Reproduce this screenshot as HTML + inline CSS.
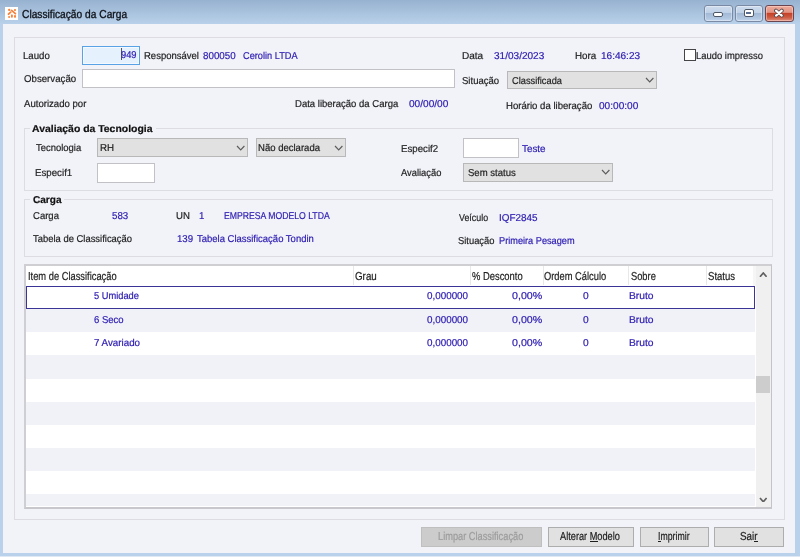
<!DOCTYPE html>
<html><head><meta charset="utf-8"><style>
*{margin:0;padding:0;box-sizing:border-box}
html,body{width:800px;height:557px;overflow:hidden}
body{position:relative;background:#b9d1ea;font-family:"Liberation Sans",sans-serif}
.a{position:absolute}
.t{position:absolute;white-space:pre;-webkit-text-stroke:0.2px currentColor;line-height:14px;text-rendering:geometricPrecision;font-family:"Liberation Sans",sans-serif;transform-origin:0 0}
.wb{position:absolute;top:5px;height:17px;border:1px solid #7a8aa4;border-radius:3px;box-shadow:inset 0 0 0 1px rgba(255,255,255,.35);background:linear-gradient(#cfdcee 0%,#c0d1e7 44%,#a3bad6 50%,#b0c6e0 80%,#c2d5ec 100%)}
</style></head><body>
<div class=a style="left:0;top:0;width:800px;height:24px;background:linear-gradient(#97b2d0,#b9d1ea)"></div>
<div class=a style="left:0;top:553px;width:800px;height:3px;background:#b9d1ea"></div>
<div class=a style="left:0;top:556px;width:800px;height:1px;background:#dde8f4"></div>
<!-- icon -->
<div class=a style="left:5px;top:7px;width:13px;height:13px;background:#fff"></div>
<svg class=a style="left:5px;top:7px;filter:blur(0.3px)" width="13" height="13" viewBox="0 0 13 13">
 <g fill="#f8823a" stroke="#f8823a" stroke-linecap="round">
  <circle cx="4.2" cy="2.9" r="1.15" stroke="none"/><circle cx="10" cy="3.1" r="1.05" stroke="none"/>
  <path d="M6.6,3.4 L10.4,6.6" stroke-width="1.8" fill="none"/>
  <path d="M3.5,7.2 L5.7,5.2" stroke-width="1.8" fill="none"/>
  <circle cx="4.1" cy="10" r="0.95" stroke="none"/>
  <ellipse cx="6.9" cy="9.1" rx="1.05" ry="1.8" stroke="none"/>
  <ellipse cx="10" cy="9.3" rx="1.0" ry="1.65" stroke="none"/>
 </g>
</svg>
<!-- window buttons -->
<div class=wb style="left:704px;width:29px"></div>
<div class=a style="left:713px;top:12px;width:10px;height:5px;background:#fff;border:1px solid #4e5766;border-radius:2px"></div>
<div class=wb style="left:735px;width:28px"></div>
<div class=a style="left:744px;top:9px;width:10px;height:8px;background:#fff;border:1px solid #4e5766;border-radius:2px"></div>
<div class=a style="left:746px;top:12px;width:5px;height:2px;background:#5a6f90"></div>
<div class=a style="left:765px;top:5px;width:29px;height:17px;border:1px solid #6b4650;border-radius:3px;box-shadow:inset 0 0 0 1px rgba(255,220,210,.5);background:linear-gradient(#eeaa9c 0%,#e39484 42%,#c4422a 50%,#cc5a40 75%,#e09080 100%)"></div>
<svg class=a style="left:773px;top:8px" width="12" height="10" viewBox="0 0 12 10"><path d="M3,2.6 L8.8,7.6 M8.8,2.6 L3,7.6" stroke="#54484e" stroke-width="3.8" stroke-linecap="round"/><path d="M3,2.6 L8.8,7.6 M8.8,2.6 L3,7.6" stroke="#fff" stroke-width="2.1" stroke-linecap="round"/></svg>

<!-- client -->
<div class=a style="left:3px;top:24px;width:792px;height:529px;background:#f2f3f9"></div>
<div class=a style="left:14px;top:37px;width:771px;height:483px;border:1px solid #dcdce2"></div>

<!-- inputs -->
<div class=a style="left:82px;top:46px;width:58px;height:19px;border:1px solid #5aa2e6;background:#e5f1fc;box-shadow:inset 0 0 0 1px #f4f9ff"></div>
<div class=a style="left:121px;top:48px;width:1px;height:12px;background:#555"></div>
<div class=a style="left:82px;top:69px;width:373px;height:19px;border:1px solid #c2c2c6;background:#fff"></div>
<div class=a style="left:507px;top:71px;width:150px;height:18px;border:1px solid #b8b8b8;background:#e1e1e1"></div>
<div class=a style="left:684px;top:49px;width:12px;height:12px;border:1px solid #454545;background:#fff"></div>

<!-- group 1 -->
<div class=a style="left:24px;top:128px;width:749px;height:63px;border:1px solid #dcdce2"></div>
<div class=a style="left:30px;top:122px;width:126px;height:12px;background:#f2f3f9"></div>
<div class=a style="left:97px;top:138px;width:151px;height:19px;border:1px solid #b8b8b8;background:#e1e1e1"></div>
<div class=a style="left:256px;top:138px;width:90px;height:19px;border:1px solid #b8b8b8;background:#e1e1e1"></div>
<div class=a style="left:97px;top:163px;width:58px;height:20px;border:1px solid #c2c2c6;background:#fff"></div>
<div class=a style="left:463px;top:138px;width:56px;height:20px;border:1px solid #c2c2c6;background:#fff"></div>
<div class=a style="left:463px;top:163px;width:150px;height:19px;border:1px solid #b8b8b8;background:#e1e1e1"></div>

<!-- group 2 -->
<div class=a style="left:24px;top:199px;width:749px;height:58px;border:1px solid #dcdce2"></div>
<div class=a style="left:30px;top:193px;width:34px;height:12px;background:#f2f3f9"></div>

<!-- grid -->
<div class=a style="left:24px;top:264px;width:748px;height:245px;border:2px solid #cfcfd3;border-right:1px solid #c4c4c8;border-bottom:2px solid #c8c8cc;background:#fff"></div>
<div class=a style="left:26px;top:266px;width:745px;height:240px;overflow:hidden;background:#fff">
<div style='position:absolute;left:0px;top:20px;width:729px;height:23px;background:#ffffff'></div>
<div style='position:absolute;left:0px;top:43px;width:729px;height:23px;background:#f1f2f8'></div>
<div style='position:absolute;left:0px;top:66px;width:729px;height:23px;background:#ffffff'></div>
<div style='position:absolute;left:0px;top:89px;width:729px;height:24px;background:#f1f2f8'></div>
<div style='position:absolute;left:0px;top:113px;width:729px;height:23px;background:#ffffff'></div>
<div style='position:absolute;left:0px;top:136px;width:729px;height:23px;background:#f1f2f8'></div>
<div style='position:absolute;left:0px;top:159px;width:729px;height:23px;background:#ffffff'></div>
<div style='position:absolute;left:0px;top:182px;width:729px;height:23px;background:#f1f2f8'></div>
<div style='position:absolute;left:0px;top:205px;width:729px;height:23px;background:#ffffff'></div>
<div style='position:absolute;left:0px;top:228px;width:729px;height:23px;background:#f1f2f8'></div>
</div>
<div class=a style="left:353px;top:266px;width:1px;height:19px;background:#e8e8e8"></div>
<div class=a style="left:470px;top:266px;width:1px;height:19px;background:#e8e8e8"></div>
<div class=a style="left:543px;top:266px;width:1px;height:19px;background:#e8e8e8"></div>
<div class=a style="left:628px;top:266px;width:1px;height:19px;background:#e8e8e8"></div>
<div class=a style="left:706px;top:266px;width:1px;height:19px;background:#e8e8e8"></div>
<div class=a style="left:26px;top:286px;width:729px;height:23px;border:1px solid #3a3496"></div>
<!-- scrollbar -->
<div class=a style="left:753px;top:266px;width:3px;height:20px;background:#f6f6f6"></div>
<div class=a style="left:756px;top:266px;width:15px;height:241px;background:#f0f0f0"></div>
<div class=a style="left:756px;top:376px;width:14px;height:17px;background:#cdcdcd"></div>

<!-- buttons -->
<div class=a style="left:421px;top:527px;width:121px;height:20px;border:1px solid #bfbfbf;background:#cccccc"></div>
<div class=a style="left:548px;top:527px;width:86px;height:20px;border:1px solid #adadad;background:#e1e1e1"></div>
<div class=a style="left:640px;top:527px;width:69px;height:20px;border:1px solid #adadad;background:#e1e1e1"></div>
<div class=a style="left:714px;top:527px;width:70px;height:20px;border:1px solid #adadad;background:#e1e1e1"></div>
<div class=a style="left:590px;top:541px;width:8px;height:1px;background:#1e1e1e"></div>
<div class=a style="left:658px;top:541px;width:3px;height:1px;background:#1e1e1e"></div>
<div class=a style="left:754px;top:541px;width:4px;height:1px;background:#1e1e1e"></div>

<svg class=a style='left:644.60px;top:77.00px' width='9.4' height='6'><path d='M1,1 L4.7,5 L8.4,1' fill='none' stroke='#5c5c5c' stroke-width='1.15'/></svg>
<svg class=a style='left:235.60px;top:144.70px' width='9.4' height='6'><path d='M1,1 L4.7,5 L8.4,1' fill='none' stroke='#5c5c5c' stroke-width='1.15'/></svg>
<svg class=a style='left:333.60px;top:144.70px' width='9.4' height='6'><path d='M1,1 L4.7,5 L8.4,1' fill='none' stroke='#5c5c5c' stroke-width='1.15'/></svg>
<svg class=a style='left:600.60px;top:169.20px' width='9.4' height='6'><path d='M1,1 L4.7,5 L8.4,1' fill='none' stroke='#5c5c5c' stroke-width='1.15'/></svg>
<svg class=a style='left:758.50px;top:271.60px' width='8.6' height='5.8'><path d='M1,4.8 L4.3,1 L7.6,4.8' fill='none' stroke='#606060' stroke-width='1.7'/></svg>
<svg class=a style='left:758.50px;top:496.50px' width='8.6' height='5.8'><path d='M1,1 L4.3,4.8 L7.6,1' fill='none' stroke='#606060' stroke-width='1.7'/></svg>
<span class=t style='left:22.36px;top:8.01px;color:#10141c;font-size:11.5px;-webkit-text-stroke:0.35px currentColor;transform:scaleX(0.8891)'>Classificação da Carga</span>
<span class=t style='left:23.23px;top:50.00px;color:#1e1e1e;font-size:10px;transform:scaleX(0.9645)'>Laudo</span>
<span class=t style='left:121.13px;top:49.00px;color:#3020b2;font-size:10px;transform:scaleX(0.9290)'>949</span>
<span class=t style='left:143.64px;top:50.00px;color:#1e1e1e;font-size:10px;transform:scaleX(0.9505)'>Responsável</span>
<span class=t style='left:202.71px;top:50.00px;color:#3020b2;font-size:10px;transform:scaleX(0.9783)'>800050</span>
<span class=t style='left:243.04px;top:50.00px;color:#3020b2;font-size:10px;transform:scaleX(0.9200)'>Cerolin LTDA</span>
<span class=t style='left:461.80px;top:50.00px;color:#1e1e1e;font-size:10px;transform:scaleX(1.0019)'>Data</span>
<span class=t style='left:494.10px;top:50.00px;color:#3020b2;font-size:10px;transform:scaleX(1.0043)'>31/03/2023</span>
<span class=t style='left:574.72px;top:50.00px;color:#1e1e1e;font-size:10px;transform:scaleX(0.9802)'>Hora</span>
<span class=t style='left:601.30px;top:50.00px;color:#3020b2;font-size:10px;transform:scaleX(1.0036)'>16:46:23</span>
<span class=t style='left:695.75px;top:50.00px;color:#1e1e1e;font-size:10px;transform:scaleX(0.9416)'>Laudo impresso</span>
<span class=t style='left:23.61px;top:73.00px;color:#1e1e1e;font-size:10px;transform:scaleX(0.9670)'>Observação</span>
<span class=t style='left:462.22px;top:75.00px;color:#1e1e1e;font-size:10px;transform:scaleX(0.9540)'>Situação</span>
<span class=t style='left:512.04px;top:75.00px;color:#1e1e1e;font-size:10px;transform:scaleX(0.9261)'>Classificada</span>
<span class=t style='left:24.40px;top:98.00px;color:#1e1e1e;font-size:10px;transform:scaleX(0.9583)'>Autorizado por</span>
<span class=t style='left:294.74px;top:98.00px;color:#1e1e1e;font-size:10px;transform:scaleX(0.9523)'>Data liberação da Carga</span>
<span class=t style='left:408.70px;top:98.00px;color:#3020b2;font-size:10px;transform:scaleX(1.0114)'>00/00/00</span>
<span class=t style='left:505.73px;top:99.80px;color:#1e1e1e;font-size:10px;transform:scaleX(0.9585)'>Horário da liberação</span>
<span class=t style='left:598.70px;top:99.70px;color:#3020b2;font-size:10px;transform:scaleX(1.0088)'>00:00:00</span>
<span class=t style='left:32.39px;top:123.00px;color:#101010;font-size:10px;font-weight:bold;transform:scaleX(1.0422)'>Avaliação da Tecnologia</span>
<span class=t style='left:35.81px;top:142.00px;color:#1e1e1e;font-size:10px;transform:scaleX(0.9444)'>Tecnologia</span>
<span class=t style='left:99.62px;top:142.00px;color:#1e1e1e;font-size:10px;transform:scaleX(0.9751)'>RH</span>
<span class=t style='left:257.99px;top:142.00px;color:#1e1e1e;font-size:10px;transform:scaleX(0.9528)'>Não declarada</span>
<span class=t style='left:400.83px;top:143.00px;color:#1e1e1e;font-size:10px;transform:scaleX(0.9678)'>Especif2</span>
<span class=t style='left:521.80px;top:143.00px;color:#3020b2;font-size:10px;transform:scaleX(0.9854)'>Teste</span>
<span class=t style='left:34.82px;top:167.00px;color:#1e1e1e;font-size:10px;transform:scaleX(0.9705)'>Especif1</span>
<span class=t style='left:401.00px;top:167.00px;color:#1e1e1e;font-size:10px;transform:scaleX(0.9342)'>Avaliação</span>
<span class=t style='left:468.32px;top:167.00px;color:#1e1e1e;font-size:10px;transform:scaleX(0.9550)'>Sem status</span>
<span class=t style='left:32.60px;top:194.00px;color:#101010;font-size:10px;font-weight:bold;transform:scaleX(1.0059)'>Carga</span>
<span class=t style='left:32.77px;top:210.00px;color:#1e1e1e;font-size:10px;transform:scaleX(0.9524)'>Carga</span>
<span class=t style='left:111.61px;top:210.00px;color:#3020b2;font-size:10px;transform:scaleX(0.9734)'>583</span>
<span class=t style='left:176.33px;top:210.00px;color:#1e1e1e;font-size:10px;transform:scaleX(0.9599)'>UN</span>
<span class=t style='left:198.82px;top:210.00px;color:#3020b2;font-size:10px;transform:scaleX(0.9659)'>1</span>
<span class=t style='left:223.81px;top:210.00px;color:#3020b2;font-size:10px;transform:scaleX(0.8658)'>EMPRESA MODELO LTDA</span>
<span class=t style='left:458.75px;top:212.00px;color:#1e1e1e;font-size:10px;transform:scaleX(0.8862)'>Veículo</span>
<span class=t style='left:498.61px;top:212.00px;color:#3020b2;font-size:10px;transform:scaleX(0.9894)'>IQF2845</span>
<span class=t style='left:33.06px;top:233.00px;color:#1e1e1e;font-size:10px;transform:scaleX(0.9426)'>Tabela de Classificação</span>
<span class=t style='left:176.82px;top:233.00px;color:#3020b2;font-size:10px;transform:scaleX(0.9663)'>139</span>
<span class=t style='left:196.81px;top:233.00px;color:#3020b2;font-size:10px;transform:scaleX(0.9479)'>Tabela Classificação Tondin</span>
<span class=t style='left:458.38px;top:235.00px;color:#1e1e1e;font-size:10px;transform:scaleX(0.9370)'>Situação</span>
<span class=t style='left:498.77px;top:235.00px;color:#3020b2;font-size:10px;transform:scaleX(0.9187)'>Primeira Pesagem</span>
<span class=t style='left:27.69px;top:270.01px;color:#1e1e1e;font-size:11.5px;transform:scaleX(0.8109)'>Item de Classificação</span>
<span class=t style='left:354.57px;top:270.01px;color:#1e1e1e;font-size:11.5px;transform:scaleX(0.8514)'>Grau</span>
<span class=t style='left:471.67px;top:270.01px;color:#1e1e1e;font-size:11.5px;transform:scaleX(0.8169)'>% Desconto</span>
<span class=t style='left:544.09px;top:270.01px;color:#1e1e1e;font-size:11.5px;transform:scaleX(0.8114)'>Ordem Cálculo</span>
<span class=t style='left:630.60px;top:270.01px;color:#1e1e1e;font-size:11.5px;transform:scaleX(0.8083)'>Sobre</span>
<span class=t style='left:707.58px;top:270.01px;color:#1e1e1e;font-size:11.5px;transform:scaleX(0.8314)'>Status</span>
<span class=t style='left:438.03px;top:530.01px;color:#9c9c9c;font-size:11.5px;transform:scaleX(0.8039)'>Limpar Classificação</span>
<span class=t style='left:560.40px;top:530.01px;color:#1e1e1e;font-size:11.5px;transform:scaleX(0.8012)'>Alterar Modelo</span>
<span class=t style='left:657.54px;top:530.01px;color:#1e1e1e;font-size:11.5px;transform:scaleX(0.7601)'>Imprimir</span>
<span class=t style='left:740.07px;top:530.01px;color:#1e1e1e;font-size:11.5px;transform:scaleX(0.8577)'>Sair</span>
<span class=t style='left:93.83px;top:290.40px;color:#3020b2;font-size:10px;transform:scaleX(0.9286)'>5 Umidade</span>
<span class=t style='left:427.20px;top:290.40px;color:#3020b2;font-size:10px;transform:scaleX(0.9842)'>0,000000</span>
<span class=t style='left:511.68px;top:290.40px;color:#3020b2;font-size:10px;transform:scaleX(1.0662)'>0,00%</span>
<span class=t style='left:582.69px;top:290.40px;color:#3020b2;font-size:10px;transform:scaleX(1.0204)'>0</span>
<span class=t style='left:629.18px;top:290.40px;color:#3020b2;font-size:10px;transform:scaleX(1.0290)'>Bruto</span>
<span class=t style='left:93.72px;top:313.53px;color:#3020b2;font-size:10px;transform:scaleX(0.9514)'>6 Seco</span>
<span class=t style='left:427.20px;top:313.53px;color:#3020b2;font-size:10px;transform:scaleX(0.9842)'>0,000000</span>
<span class=t style='left:511.68px;top:313.53px;color:#3020b2;font-size:10px;transform:scaleX(1.0662)'>0,00%</span>
<span class=t style='left:582.69px;top:313.53px;color:#3020b2;font-size:10px;transform:scaleX(1.0204)'>0</span>
<span class=t style='left:629.18px;top:313.53px;color:#3020b2;font-size:10px;transform:scaleX(1.0290)'>Bruto</span>
<span class=t style='left:93.71px;top:336.66px;color:#3020b2;font-size:10px;transform:scaleX(0.9772)'>7 Avariado</span>
<span class=t style='left:427.20px;top:336.66px;color:#3020b2;font-size:10px;transform:scaleX(0.9842)'>0,000000</span>
<span class=t style='left:511.68px;top:336.66px;color:#3020b2;font-size:10px;transform:scaleX(1.0662)'>0,00%</span>
<span class=t style='left:582.69px;top:336.66px;color:#3020b2;font-size:10px;transform:scaleX(1.0204)'>0</span>
<span class=t style='left:629.18px;top:336.66px;color:#3020b2;font-size:10px;transform:scaleX(1.0290)'>Bruto</span>
</body></html>
